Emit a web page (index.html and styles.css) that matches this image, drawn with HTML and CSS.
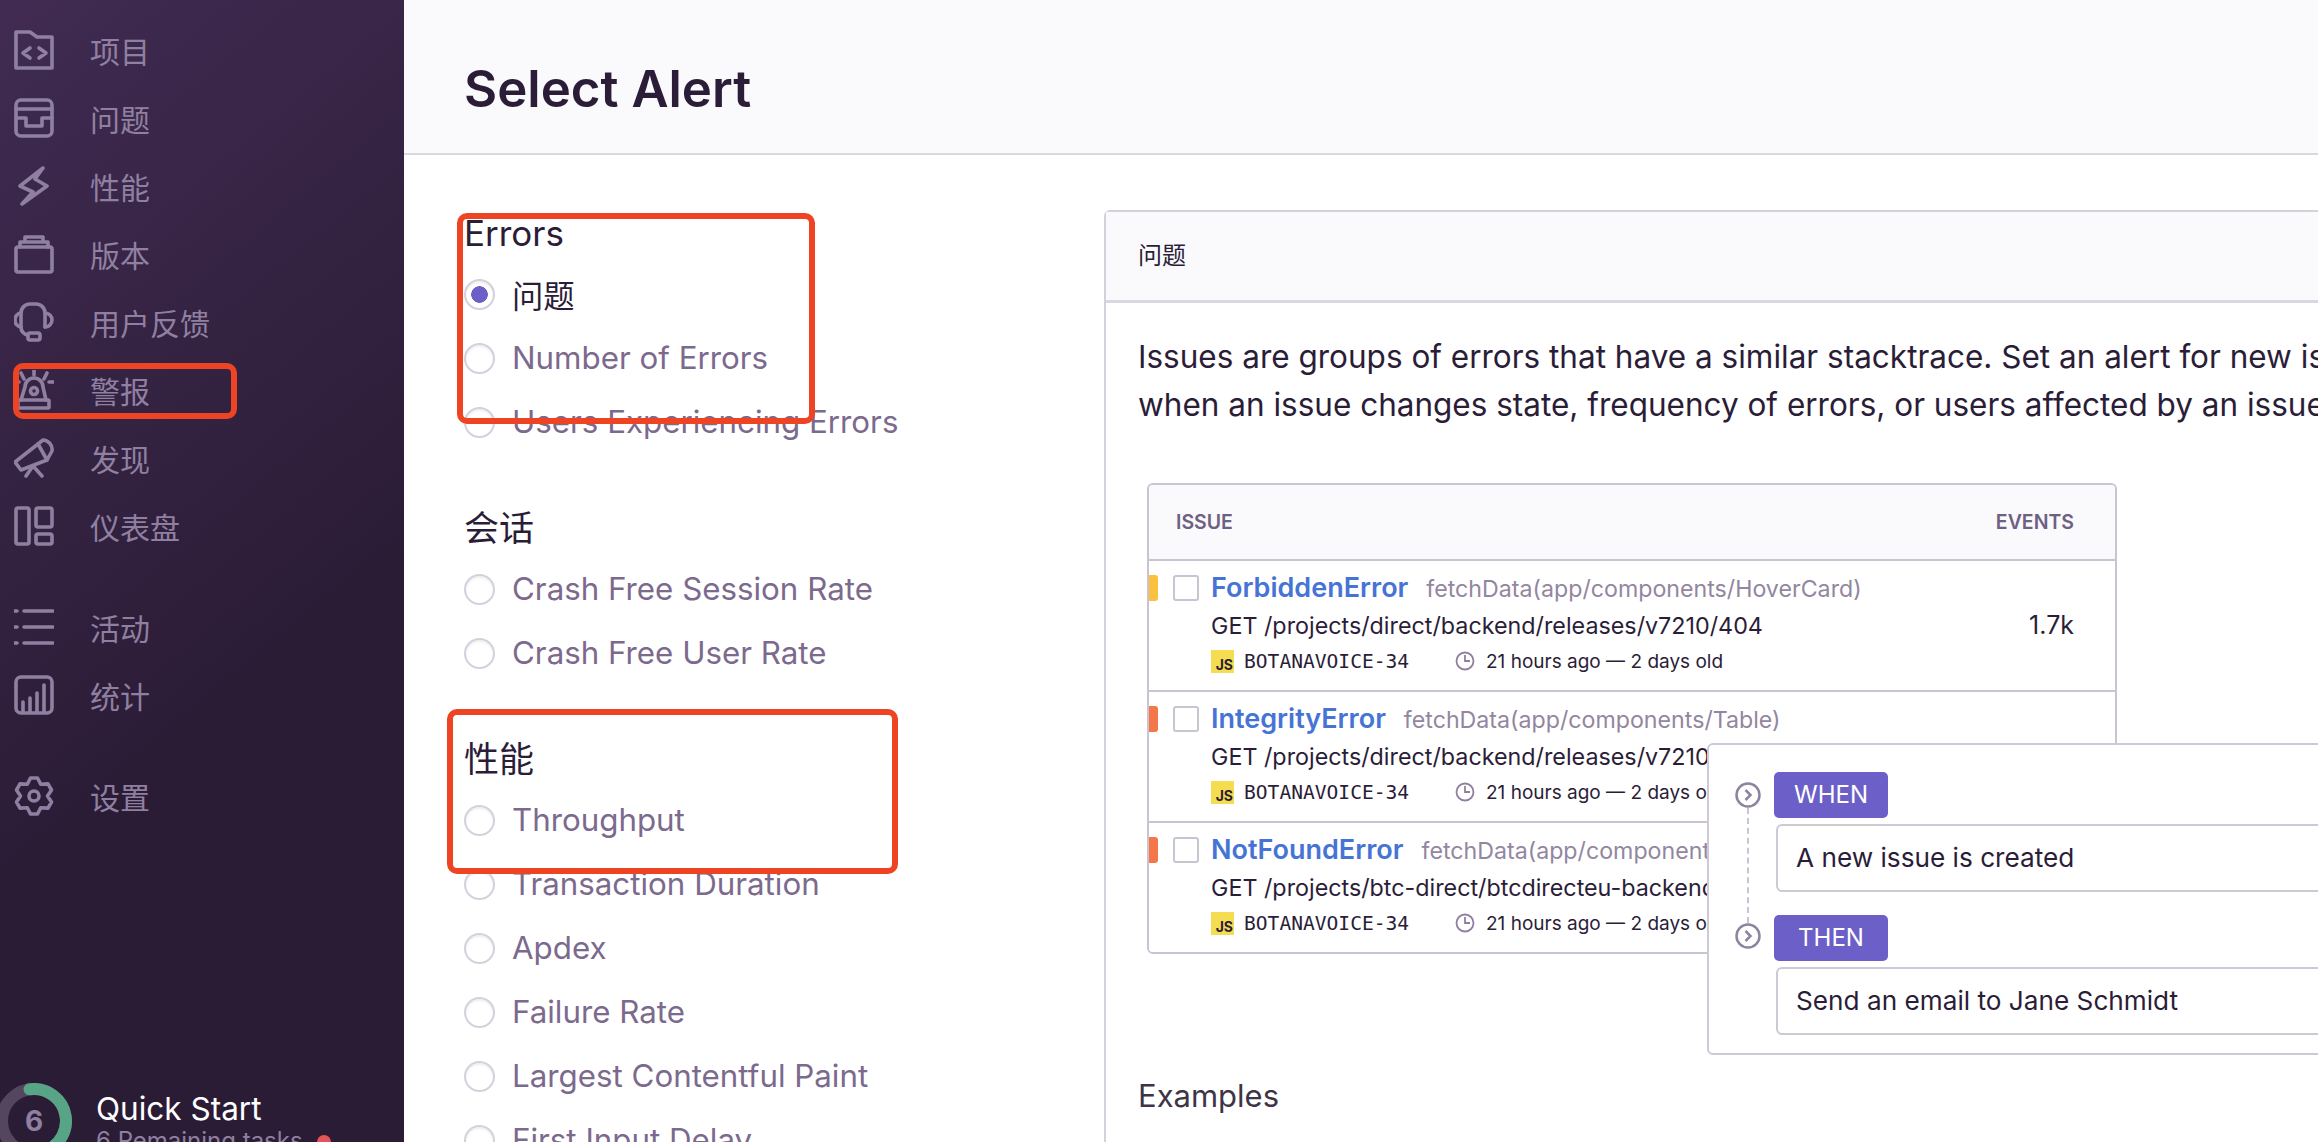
FILE: index.html
```html
<!DOCTYPE html>
<html lang="zh">
  <head>
    <meta charset="UTF-8" />
    <title>Select Alert</title>
    <link rel="stylesheet" href="styles.css">
  </head>
  <body>
    <aside class="sidebar">
      <nav class="nav-group">
        <a class="nav-item"><svg class="nav-icon" viewBox="0 0 40 40"><path d="M2 2H16L23 7H38V38H2Z"/><path d="M16 18L9 23L16 28M25 18L32 23L25 28"/></svg><span>项目</span></a>
        <a class="nav-item"><svg class="nav-icon" viewBox="0 0 40 40"><rect x="2" y="2" width="36" height="36" rx="5"/><path d="M2 11H38M2 20H12V28H28V20H38"/></svg><span>问题</span></a>
        <a class="nav-item"><svg class="nav-icon" viewBox="0 0 40 40"><path d="M29 2L6 20L19 26L8 38L33 20L21 13Z"/></svg><span>性能</span></a>
        <a class="nav-item"><svg class="nav-icon" viewBox="0 0 40 40"><rect x="2" y="13" width="36" height="25" rx="2"/><path d="M6 13V8H34V13M11 8V3H29V8"/></svg><span>版本</span></a>
        <a class="nav-item"><svg class="nav-icon" viewBox="0 0 40 40"><path d="M7 25V11A9 9 0 0 1 16 2H22A9 9 0 0 1 31 11V25"/><path d="M7 11A6 7 0 0 0 7 25M31 11A7 7 0 0 1 31 25"/><path d="M7 25C7 29 9 32 14 33"/><rect x="14" y="31" width="12" height="7" rx="2"/></svg><span>用户反馈</span></a>
        <a class="nav-item"><svg class="nav-icon" viewBox="0 0 40 40"><rect x="4" y="30" width="31" height="8" rx="1"/><path d="M7 30L11 17A9 9 0 0 1 29 17L32 30"/><circle cx="20" cy="21" r="3.5"/><path d="M20 0V5M7 3L10 9M33 3L30 9M0 12H5M35 12H40"/></svg><span>警报</span></a>
        <a class="nav-item"><svg class="nav-icon" viewBox="0 0 40 40"><path d="M1 24L24 6L33 22L7 32Z"/><path d="M24 6L29 2C34 2 39 7 38 13L33 22"/><path d="M19 28L12 38M19 28L28 38"/></svg><span>发现</span></a>
        <a class="nav-item"><svg class="nav-icon" viewBox="0 0 40 40"><rect x="2" y="2" width="13" height="36" rx="2"/><rect x="22" y="2" width="16" height="19" rx="2"/><rect x="22" y="28" width="16" height="10" rx="2"/></svg><span>仪表盘</span></a>
      </nav>
      <nav class="nav-group">
        <a class="nav-item"><svg class="nav-icon" viewBox="0 0 40 40"><path d="M1 4H3M1 20H3M1 36H3M10 4H39M10 20H39M10 36H39"/></svg><span>活动</span></a>
        <a class="nav-item"><svg class="nav-icon" viewBox="0 0 40 40"><rect x="2" y="2" width="36" height="36" rx="5"/><path d="M9 37V27M16 37V23M23 37V18M30 37V10"/></svg><span>统计</span></a>
      </nav>
      <nav class="nav-group">
        <a class="nav-item"><svg class="nav-icon" viewBox="0 0 40 40"><polygon points="16.5,2 23.5,2 26.7,8.3 34,7.9 37.5,14 33.5,20 37.5,26 34,32.1 26.7,31.7 23.5,38 16.5,38 13.3,31.7 6,32.1 2.5,26 6.5,20 2.5,14 6,7.9 13.3,8.3"/><circle cx="20" cy="20" r="5"/></svg><span>设置</span></a>
      </nav>
      <div class="quick-start">
        <div class="ring">
          <svg viewBox="0 0 76 76" width="76" height="76">
            <circle class="ring-bg" cx="38" cy="38" r="32"/>
            <circle class="ring-fill" cx="38" cy="38" r="32" pathLength="100" stroke-dasharray="45 100" transform="rotate(-98 38 38)"/>
          </svg>
          <span class="ring-num">6</span>
        </div>
        <div class="qs-text">
          <div class="qs-title">Quick Start</div>
          <div class="qs-sub">6 Remaining tasks <i class="qs-dot"></i></div>
        </div>
      </div>
    </aside>

    <main class="content">
      <header class="page-head"><h1>Select Alert</h1></header>
      <div class="page-body">
        <form class="alert-list">
          <h3 class="group-title">Errors</h3>
          <label class="option active"><input type="radio" name="alert" checked />问题</label>
          <label class="option"><input type="radio" name="alert" />Number of Errors</label>
          <label class="option"><input type="radio" name="alert" />Users Experiencing Errors</label>

          <h3 class="group-title spaced">会话</h3>
          <label class="option"><input type="radio" name="alert" />Crash Free Session Rate</label>
          <label class="option"><input type="radio" name="alert" />Crash Free User Rate</label>

          <h3 class="group-title spaced">性能</h3>
          <label class="option"><input type="radio" name="alert" />Throughput</label>
          <label class="option"><input type="radio" name="alert" />Transaction Duration</label>
          <label class="option"><input type="radio" name="alert" />Apdex</label>
          <label class="option"><input type="radio" name="alert" />Failure Rate</label>
          <label class="option"><input type="radio" name="alert" />Largest Contentful Paint</label>
          <label class="option"><input type="radio" name="alert" />First Input Delay</label>
        </form>

        <section class="panel">
          <div class="panel-head">问题</div>
          <div class="panel-body">
            <p class="desc">Issues are groups of errors that have a similar stacktrace. Set an alert for new issues,</p>
            <p class="desc">when an issue changes state, frequency of errors, or users affected by an issue exceeds a threshold.</p>

            <div class="issue-table">
              <div class="table-head"><span>Issue</span><span>Events</span></div>

              <div class="issue-row">
                <i class="level yellow"></i><i class="check"></i>
                <div class="issue-main">
                  <div class="issue-title"><b>ForbiddenError</b><span>fetchData(app/components/HoverCard)</span></div>
                  <div class="issue-msg">GET /projects/direct/backend/releases/v7210/404</div>
                  <div class="issue-meta">
                    <span class="js-badge">JS</span><code>BOTANAVOICE-34</code>
                    <svg class="clock" viewBox="0 0 20 20"><circle cx="10" cy="10" r="8.5"/><path d="M10 4V10H15"/></svg>
                    <span>21 hours ago — 2 days old</span>
                  </div>
                </div>
                <div class="issue-count">1.7k</div>
              </div>

              <div class="issue-row">
                <i class="level orange"></i><i class="check"></i>
                <div class="issue-main">
                  <div class="issue-title"><b>IntegrityError</b><span>fetchData(app/components/Table)</span></div>
                  <div class="issue-msg">GET /projects/direct/backend/releases/v7210/404</div>
                  <div class="issue-meta">
                    <span class="js-badge">JS</span><code>BOTANAVOICE-34</code>
                    <svg class="clock" viewBox="0 0 20 20"><circle cx="10" cy="10" r="8.5"/><path d="M10 4V10H15"/></svg>
                    <span>21 hours ago — 2 days old</span>
                  </div>
                </div>
              </div>

              <div class="issue-row">
                <i class="level orange"></i><i class="check"></i>
                <div class="issue-main">
                  <div class="issue-title"><b>NotFoundError</b><span>fetchData(app/components/Table)</span></div>
                  <div class="issue-msg">GET /projects/btc-direct/btcdirecteu-backend/releases</div>
                  <div class="issue-meta">
                    <span class="js-badge">JS</span><code>BOTANAVOICE-34</code>
                    <svg class="clock" viewBox="0 0 20 20"><circle cx="10" cy="10" r="8.5"/><path d="M10 4V10H15"/></svg>
                    <span>21 hours ago — 2 days old</span>
                  </div>
                </div>
              </div>
            </div>

            <h4 class="examples">Examples</h4>
          </div>

          <div class="rule-card">
            <div class="rule-rail">
              <svg class="step" viewBox="0 0 26 26"><circle cx="13" cy="13" r="11.5"/><path d="M10.5 8L15.5 13L10.5 18"/></svg>
              <i class="rail-line"></i>
              <svg class="step" viewBox="0 0 26 26"><circle cx="13" cy="13" r="11.5"/><path d="M10.5 8L15.5 13L10.5 18"/></svg>
            </div>
            <div class="rule-steps">
              <span class="rule-badge">WHEN</span>
              <div class="rule-box">A new issue is created</div>
              <span class="rule-badge then">THEN</span>
              <div class="rule-box">Send an email to Jane Schmidt</div>
            </div>
          </div>
        </section>
      </div>
    </main>

    <!-- red annotations drawn over the screenshot -->
    <div class="mark mark-nav"></div>
    <div class="mark mark-errors"></div>
    <div class="mark mark-perf"></div>
  </body>
</html>
```

FILE: styles.css
```css
* {
  margin: 0;
  padding: 0;
  box-sizing: border-box;
}
body {
  display: flex;
  height: 100vh;
  overflow: hidden;
  background-color: #fff;
  color: #2b1d38;
  font-family: Inter, "Noto Sans CJK SC", sans-serif;
}

/* sidebar */
.sidebar {
  flex: 0 0 404px;
  height: 100vh;
  padding-top: 16px;
  overflow: hidden;
  background: linear-gradient(320deg, #2b1c36 40%, #412b52 100%);
}
.nav-group {
  margin-bottom: 33px;
}
.nav-item {
  display: flex;
  align-items: center;
  gap: 36px;
  height: 68px;
  padding-left: 14px;
  color: #8f80a1;
  font-size: 30px;
}
.nav-icon {
  width: 40px;
  height: 40px;
  flex: none;
  fill: none;
  stroke: #8f80a1;
  stroke-width: 3.6;
  stroke-linejoin: round;
  stroke-linecap: round;
}
.quick-start {
  display: flex;
  gap: 24px;
  margin-top: 253px;
  margin-left: -4px;
}
.ring {
  position: relative;
  width: 76px;
  height: 76px;
  flex: none;
}
.ring circle {
  fill: none;
  stroke-width: 12;
}
.ring-bg {
  stroke: #55455f;
}
.ring-fill {
  stroke: #57a586;
  stroke-linecap: round;
}
.ring-num {
  position: absolute;
  inset: 0;
  display: flex;
  align-items: center;
  justify-content: center;
  color: #8f80a1;
  font-size: 28px;
  font-weight: 700;
}
.qs-title {
  color: #fff;
  font-size: 31.5px;
  line-height: 36px;
  margin-top: 8px;
}
.qs-sub {
  color: #8f80a1;
  font-size: 24px;
  line-height: 28px;
}
.qs-dot {
  display: inline-block;
  width: 14px;
  height: 14px;
  margin-left: 8px;
  border-radius: 50%;
  background-color: #e4555a;
}

/* page */
.content {
  flex: 1;
  min-width: 0;
}
.page-head {
  height: 155px;
  padding: 57px 0 0 60px;
  background-color: #faf9fb;
  border-bottom: 2px solid #dbd7e2;
}
.page-head h1 {
  font-size: 51px;
  line-height: 64px;
  font-weight: 600;
}
.page-body {
  display: flex;
  padding-left: 60px;
}
.alert-list {
  flex: 0 0 640px;
  padding-top: 58px;
}
.group-title {
  font-size: 35px;
  line-height: 40px;
  font-weight: 400;
  margin-bottom: 9px;
}
.group-title.spaced {
  margin-top: 54px;
}
.option {
  display: flex;
  align-items: center;
  gap: 17px;
  height: 64px;
  color: #7c6a8e;
  font-size: 31.3px;
  white-space: nowrap;
}
.option.active {
  color: #2b1d38;
}
.option input {
  appearance: none;
  width: 31px;
  height: 31px;
  margin: 0;
  border: 2px solid #d5d0dc;
  border-radius: 50%;
  box-shadow: inset 0 2px 2px #f0eef3;
}
.option input:checked {
  background: radial-gradient(circle, #6c5fc7 8px, #fff 8.6px);
}

/* right panel */
.panel {
  position: relative;
  flex: none;
  width: 1400px;
  margin-top: 55px;
  border: 2px solid #d5d0dc;
  border-radius: 6px 0 0 0;
}
.panel-head {
  height: 91px;
  padding-left: 32px;
  line-height: 88px;
  font-size: 24px;
  background-color: #faf9fb;
  border-bottom: 3px solid #dbd7e2;
}
.panel-body {
  padding: 30px 0 0 32px;
}
.desc {
  font-size: 31.5px;
  line-height: 48px;
  white-space: nowrap;
}
.issue-table {
  width: 970px;
  margin: 54px 0 0 9px;
  border: 2px solid #c9c3d2;
  border-radius: 6px;
  overflow: hidden;
}
.table-head {
  display: flex;
  justify-content: space-between;
  align-items: center;
  height: 74px;
  padding: 0 41px 0 27px;
  background-color: #faf9fb;
  color: #6f5f84;
  font-size: 19.5px;
  font-weight: 600;
  text-transform: uppercase;
}
.issue-row {
  display: flex;
  height: 131px;
  padding-top: 14px;
  border-top: 2px solid #c9c3d2;
  background-color: #fff;
}
.level {
  width: 9px;
  height: 26px;
  flex: none;
  border-radius: 0 3px 3px 0;
}
.level.yellow {
  background-color: #f9c13f;
}
.level.orange {
  background-color: #f4774b;
}
.check {
  width: 26px;
  height: 26px;
  flex: none;
  margin-left: 15px;
  border: 2px solid #c9c3d2;
  border-radius: 3px;
}
.issue-main {
  flex: 1;
  min-width: 0;
  margin-left: 12px;
}
.issue-title {
  display: flex;
  align-items: baseline;
  gap: 18px;
  height: 28px;
  line-height: 26px;
  white-space: nowrap;
}
.issue-title b {
  color: #4674d5;
  font-size: 27px;
  font-weight: 600;
}
.issue-title span {
  color: #9386a0;
  font-size: 23.2px;
}
.issue-msg {
  margin-top: 4px;
  height: 38px;
  line-height: 38px;
  font-size: 23.3px;
  white-space: nowrap;
}
.issue-meta {
  display: flex;
  align-items: center;
  height: 24px;
  margin-top: 4px;
  font-size: 19px;
  white-space: nowrap;
}
.issue-meta code {
  margin-left: 10px;
  width: 211px;
  font-family: "DejaVu Sans Mono", monospace;
  font-size: 19.6px;
}
.js-badge {
  width: 23px;
  height: 23px;
  flex: none;
  padding: 6px 1px 0 0;
  background-color: #f4dd50;
  color: #2b1d38;
  font-size: 14px;
  line-height: 17px;
  font-weight: 700;
  text-align: right;
}
.clock {
  width: 20px;
  height: 20px;
  margin-right: 11px;
  flex: none;
  fill: none;
  stroke: #8f80a1;
  stroke-width: 1.8;
}
.issue-count {
  flex: none;
  padding: 30px 41px 0 0;
  font-size: 25px;
  line-height: 40px;
}
.examples {
  margin-top: 122px;
  color: #3e3446;
  font-size: 31px;
  line-height: 40px;
  font-weight: 400;
}

/* when/then card, sits over the table */
.rule-card {
  position: absolute;
  left: 601px;
  top: 531px;
  display: flex;
  width: 900px;
  height: 312px;
  padding: 27px 0 0 26px;
  background-color: #fff;
  border: 2px solid #cfc9d6;
  border-radius: 6px;
}
.rule-rail {
  display: flex;
  flex-direction: column;
  align-items: center;
  width: 26px;
  padding-top: 10px;
}
.step {
  width: 26px;
  height: 26px;
  flex: none;
  fill: none;
  stroke: #8f84a0;
  stroke-width: 2.5;
}
.rail-line {
  height: 115px;
  border-left: 2px dashed #c9c3d2;
}
.rule-steps {
  flex: 1;
  margin-left: 13px;
}
.rule-badge {
  display: block;
  width: 114px;
  height: 46px;
  line-height: 46px;
  border-radius: 5px;
  background-color: #6c5fc7;
  color: #fff;
  font-size: 24px;
  text-align: center;
}
.rule-box {
  height: 68px;
  margin: 6px 0 0 2px;
  padding-left: 18px;
  line-height: 64px;
  font-size: 26.2px;
  border: 2px solid #cfc9d6;
  border-radius: 6px;
}
.rule-badge.then {
  margin-top: 23px;
}

/* annotations */
.mark {
  position: absolute;
  border: 6px solid #ee4423;
  border-radius: 10px;
}
.mark-nav {
  left: 13px;
  top: 363px;
  width: 224px;
  height: 56px;
}
.mark-errors {
  left: 457px;
  top: 213px;
  width: 358px;
  height: 211px;
}
.mark-perf {
  left: 447px;
  top: 709px;
  width: 451px;
  height: 165px;
}
```
